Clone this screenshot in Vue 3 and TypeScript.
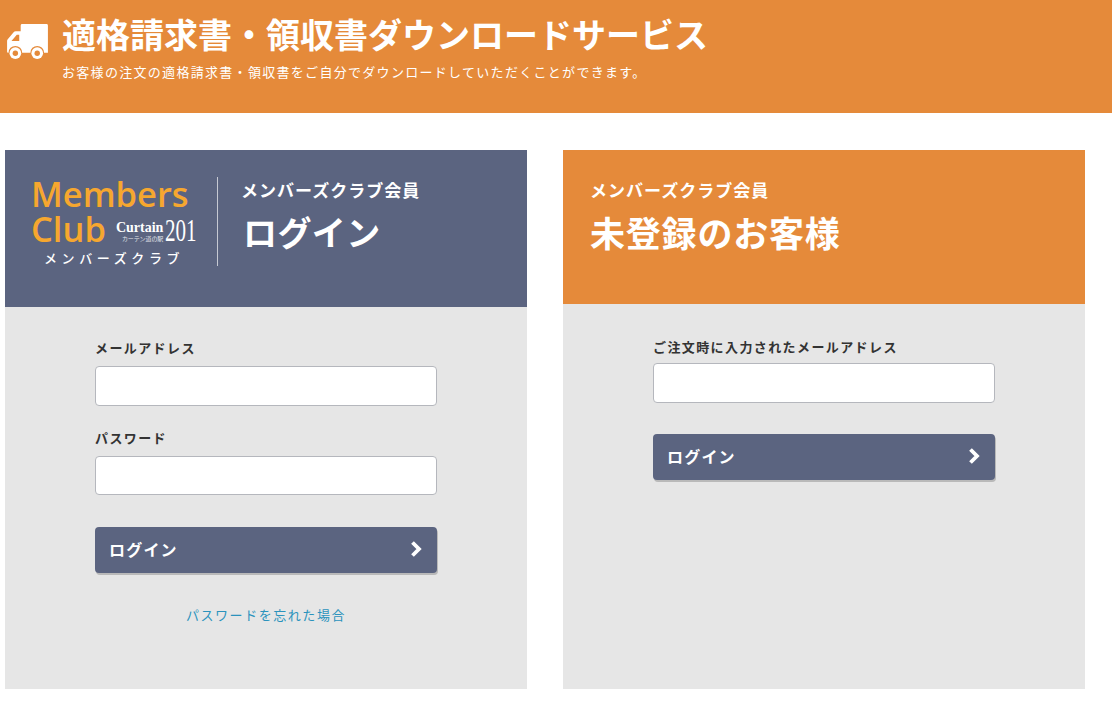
<script setup lang="ts">
const title = '適格請求書・領収書ダウンロードサービス'
const subtitle = 'お客様の注文の適格請求書・領収書をご自分でダウンロードしていただくことができます。'
</script>

<template>
  <div class="page">
    <header class="top">
      <svg class="truck" viewBox="0 0 42 36" width="41" height="35" aria-hidden="true">
        <path fill="#fff" d="M14 1.5Q14 0 15.500 0H40.500Q42 0 42 1.500V29.500H38A7 7 0 0 0 24 29.500H15.500A7 7 0 0 0 1.500 29.500H1Q0 29.500 0 28.500V17.500Q0 16.500 .7 15.800L6.500 8.800Q7.500 7.500 9 7.500H14ZM10 11 4.500 17.500H12.500V11Z" fill-rule="evenodd"/>
        <circle cx="8.500" cy="30" r="6" fill="#fff"/>
        <circle cx="8.500" cy="30" r="2.800" fill="#e58a3a"/>
        <circle cx="31" cy="30" r="6" fill="#fff"/>
        <circle cx="31" cy="30" r="2.800" fill="#e58a3a"/>
      </svg>
      <div class="top-text">
        <h1>{{ title }}</h1>
        <p>{{ subtitle }}</p>
      </div>
    </header>

    <main class="columns">
      <section class="panel">
        <div class="panel-head navy">
          <div class="logo">
            <div class="logo-main">Members</div>
            <div class="logo-row">
              <span class="logo-main">Club</span>
              <span class="brand">
                <span class="brand-left">
                  <span class="brand-name">Curtain</span>
                  <span class="brand-sub">カーテン道の駅</span>
                </span>
                <span class="brand-num">201</span>
              </span>
            </div>
            <div class="logo-kana">メンバーズクラブ</div>
          </div>
          <div class="head-text">
            <div class="head-small">メンバーズクラブ会員</div>
            <div class="head-large login-title">ログイン</div>
          </div>
        </div>
        <div class="panel-body">
          <div class="form">
            <label class="field">
              <span>メールアドレス</span>
              <input type="text" />
            </label>
            <label class="field second">
              <span>パスワード</span>
              <input type="password" />
            </label>
            <button class="btn" type="button">
              <span>ログイン</span>
              <svg viewBox="0 0 14 16" width="14" height="16" aria-hidden="true"><path d="M2.500 1.500 9 8 2.500 14.500" fill="none" stroke="#fff" stroke-width="3.800"/></svg>
            </button>
            <a class="forgot" href="#">パスワードを忘れた場合</a>
          </div>
        </div>
      </section>

      <section class="panel">
        <div class="panel-head orange">
          <div class="head-text guest">
            <div class="head-small">メンバーズクラブ会員</div>
            <div class="head-large">未登録のお客様</div>
          </div>
        </div>
        <div class="panel-body">
          <div class="form guest-form">
            <label class="field">
              <span>ご注文時に入力されたメールアドレス</span>
              <input type="text" />
            </label>
            <button class="btn guest-btn" type="button">
              <span>ログイン</span>
              <svg viewBox="0 0 14 16" width="14" height="16" aria-hidden="true"><path d="M2.500 1.500 9 8 2.500 14.500" fill="none" stroke="#fff" stroke-width="3.800"/></svg>
            </button>
          </div>
        </div>
      </section>
    </main>
  </div>
</template>

<style>
html, body { background: #fff; }
</style>

<style scoped>
.page {
  width: 1112px;
  height: 711px;
  overflow: hidden;
  font-family: "Noto Sans CJK JP", "Noto Sans", sans-serif;
  background: #fff;
}
.top {
  height: 113px;
  box-sizing: border-box;
  background: #e58a3a;
  color: #fff;
  display: flex;
  padding: 14px 0 0 7px;
}
.truck { margin: 10px 14px 0 0; flex: none; }
.top-text { min-width: 0; }
h1 {
  margin: 0;
  font-size: 34px;
  line-height: 40px;
  font-weight: 700;
  white-space: nowrap;
}
.top-text p {
  margin: 8px 0 0;
  font-size: 13px;
  line-height: 20px;
  letter-spacing: 1.3px;
  white-space: nowrap;
}
.columns {
  display: flex;
  gap: 36px;
  padding: 37px 0 0 5px;
}
.panel {
  width: 522px;
  height: 539px;
  display: flex;
  flex-direction: column;
}
.panel-head { display: flex; flex: none; color: #fff; }
.navy { height: 157px; background: #5b6480; }
.orange { height: 154px; background: #e58a3a; }
.logo {
  width: 213px;
  height: 89px;
  margin-top: 27px;
  box-sizing: border-box;
  padding-left: 26px;
  border-right: 1px solid #c6c9d3;
}
.logo-main {
  font-family: "Open Sans", sans-serif;
  font-size: 34.5px;
  line-height: 33px;
  font-weight: 600;
  color: #f6a72f;
}
.logo-row { display: flex; align-items: flex-end; gap: 10px; height: 35px; }
.brand { display: flex; align-items: flex-start; margin-bottom: 1px; height: 26px; }
.brand-left { display: flex; flex-direction: column; width: 49px; }
.brand-name {
  font-family: "Liberation Serif", serif;
  font-size: 14px;
  line-height: 15px;
  font-weight: 700;
  margin-top: 2px;
  white-space: nowrap;
}
.brand-sub {
  font-size: 6px;
  line-height: 7px;
  padding-left: 6px;
  color: #e2e4ea;
  white-space: nowrap;
  letter-spacing: -0.1px;
}
.brand-num {
  font-family: "Liberation Serif", serif;
  font-size: 31px;
  line-height: 26px;
  width: 32px;
  display: inline-block;
  transform: scaleX(0.68);
  transform-origin: left center;
}
.logo-kana {
  margin-top: 4px;
  padding-left: 13px;
  font-size: 13px;
  line-height: 18px;
  font-weight: 500;
  letter-spacing: 4.6px;
  white-space: nowrap;
}
.head-text { margin: 26px 0 0 23px; }
.guest { margin-left: 27px; }
.head-small {
  font-size: 17px;
  line-height: 28px;
  font-weight: 700;
  letter-spacing: 1px;
}
.head-large {
  margin-top: 4px;
  font-size: 35px;
  line-height: 48px;
  font-weight: 700;
  letter-spacing: 0.8px;
}
.login-title { margin-left: 2px; font-size: 34px; letter-spacing: 0.4px; }
.panel-body {
  flex: 1;
  display: flex;
  justify-content: center;
  background: #e6e6e6;
}
.form {
  width: 342px;
  padding-top: 31px;
  display: flex;
  flex-direction: column;
}
.guest-form { padding-top: 33px; }
.field { display: flex; flex-direction: column; }
.field span {
  font-size: 13px;
  line-height: 19px;
  font-weight: 700;
  letter-spacing: 1.4px;
  color: #333;
  white-space: nowrap;
}
.field input {
  height: 40px;
  margin-top: 9px;
  box-sizing: border-box;
  border: 1px solid #b5b7bd;
  border-radius: 4px;
  background: #fff;
  outline: none;
}
.guest-form .field input { margin-top: 7px; }
.second { margin-top: 22px; }
.second input { height: 39px; }
.btn {
  width: 342px;
  height: 46px;
  margin-top: 32px;
  flex: none;
  box-sizing: border-box;
  padding: 0 14px 2px;
  display: flex;
  align-items: center;
  justify-content: space-between;
  border: 0;
  border-radius: 4px;
  background: #5b6480;
  box-shadow: 1px 2px 0 #b9b9b9;
  color: #fff;
  font: 700 16px/22px "Noto Sans CJK JP", sans-serif;
  letter-spacing: 1.2px;
}
.btn svg { margin-right: -1px; }
.guest-btn { margin-top: 31px; }
.forgot {
  margin-top: 32px;
  text-align: center;
  font-size: 13px;
  line-height: 20px;
  letter-spacing: 1.55px;
  color: #2b93bd;
  text-decoration: none;
}
</style>
